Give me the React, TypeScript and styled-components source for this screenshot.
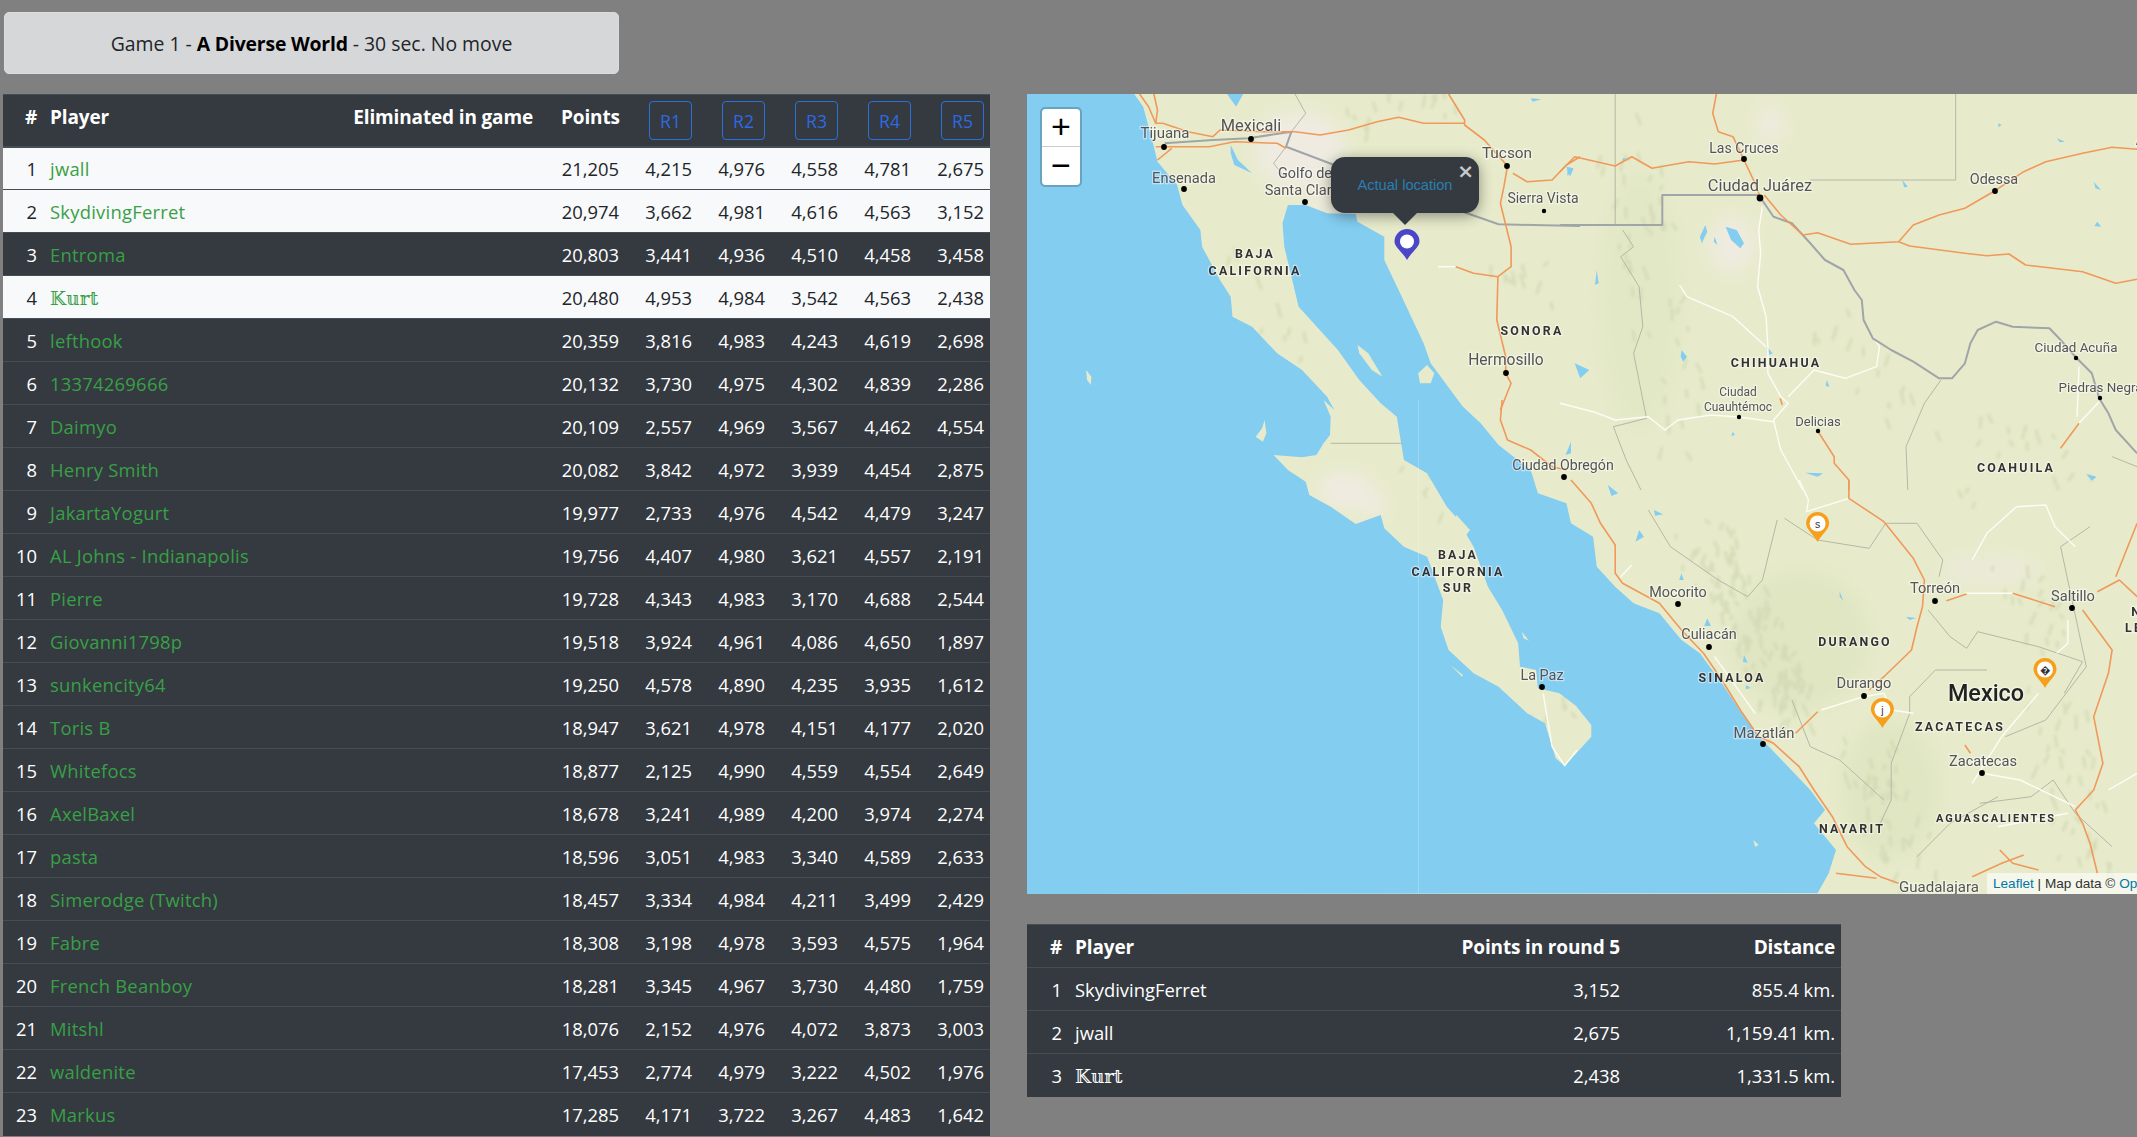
import React from 'react';
import styled, { createGlobalStyle } from 'styled-components';

const Global = createGlobalStyle`
  html, body { margin: 0; height: 100%; overflow: hidden; background: #808080; }
  body { font-family: "Open Sans", "DejaVu Serif", "DejaVu Sans", sans-serif; font-size: 18.4px; color: #212529; }
`;

const Page = styled.div`
  display: grid;
  grid-template-columns: 987px 1110px;
  column-gap: 37px;
  padding-left: 3px;
  height: 1137px;
  overflow: hidden;
`;
const LeftColumn = styled.div`display: flex; flex-direction: column; align-items: flex-start;`;
const RightColumn = styled.div`display: flex; flex-direction: column; align-items: flex-start; padding-top: 94px;`;
const Banner = styled.div`
  box-sizing: border-box;
  width: 615px;
  height: 62px;
  margin: 12px 0 20px 1px;
  display: flex;
  align-items: center;
  justify-content: center;
  background: #d6d7d9;
  border: 1px solid #dcdde0;
  border-radius: 5px;
  font-size: 19.4px;
  color: #212529;
  white-space: pre;
  b { font-weight: 700; color: #000; letter-spacing: -.2px; }
`;
const Table = styled.table<{ $width: number; $gap?: number }>`
  border-collapse: collapse;
  table-layout: fixed;
  width: ${p => p.$width}px;
  margin-top: ${p => p.$gap ?? 0}px;
  background: #343a40;
  color: #fff;
  flex: none;
`;
const HeadCell = styled.th<{ $align?: string; $width?: number; $pad?: number }>`
  box-sizing: border-box;
  ${p => p.$width ? `width: ${p.$width}px;` : ''}
  height: 52px;
  padding: 9px ${p => p.$pad ?? 6}px 0 7px;
  vertical-align: top;
  text-align: ${p => p.$align ?? 'left'};
  font-weight: 700;
  font-size: 19px;
  line-height: 26px;
  letter-spacing: -.15px;
  border-top: 1px solid #454d55;
  border-bottom: 2px solid #454d55;
  white-space: nowrap;
`;
const SmallHead = styled(HeadCell)`
  height: 43px;
  padding-top: 9px;
  border-bottom: 1px solid #454d55;
`;
const RoundHead = styled(HeadCell)`padding-top: 6px;`;
const RoundButton = styled.button`
  box-sizing: border-box;
  display: block;
  margin-left: auto;
  width: 43px;
  height: 39px;
  padding: 0;
  background: transparent;
  border: 1px solid #2b71db;
  border-radius: 4px;
  color: #2f69e2;
  font: 400 17.6px "Open Sans", sans-serif;
`;
const Row = styled.tr<{ $light?: boolean }>`
  background: ${p => p.$light ? '#f8f9fa' : '#343a40'};
  color: ${p => p.$light ? '#212529' : '#fff'};
`;
const Cell = styled.td<{ $align?: string }>`
  box-sizing: border-box;
  height: 43px;
  padding: 0 6px 0 7px;
  border-top: 1px solid #454d55;
  text-align: ${p => p.$align ?? 'left'};
  white-space: nowrap;
  overflow: hidden;
`;
const PlayerName = styled.span`color: #38a046; letter-spacing: .25px;`;
const MapFrame = styled.div`
  position: relative;
  width: 1110px;
  height: 800px;
  overflow: hidden;
  flex: none;
  background: #e8ebcb;
`;
const MapDrawing = styled.svg`
  display: block;
  width: 1110px;
  height: 800px;
`;
const Zoom = styled.div`
  position: absolute;
  left: 13px;
  top: 13px;
  width: 42px;
  border: 2px solid rgba(0,0,0,.2);
  border-radius: 5px;
  background-clip: padding-box;
  box-sizing: border-box;
`;
const ZoomButton = styled.div<{ $last?: boolean }>`
  box-sizing: border-box;
  height: 38px;
  padding-bottom: 3px;
  display: flex;
  align-items: center;
  justify-content: center;
  background: #fff;
  color: #000;
  font: 400 34px/1 "Liberation Sans", sans-serif;
  border-bottom: ${p => p.$last ? 'none' : '1px solid #ccc'};
  border-radius: ${p => p.$last ? '0 0 4px 4px' : '4px 4px 0 0'};
`;
const Popup = styled.div`
  position: absolute;
  left: 304px;
  top: 63px;
  box-sizing: border-box;
  width: 148px;
  height: 56px;
  padding-top: 19px;
  text-align: center;
  background: #343a40;
  border-radius: 14px;
  box-shadow: 0 3px 14px rgba(0,0,0,.4);
  color: #2a7fb0;
  font: 400 14.6px/18px "Liberation Sans", Arial, sans-serif;
  &::after {
    content: '';
    position: absolute;
    left: 61px;
    bottom: -12px;
    border-left: 13px solid transparent;
    border-right: 13px solid transparent;
    border-top: 13px solid #343a40;
  }
`;
const PopupClose = styled.span`
  position: absolute;
  right: 5px;
  top: 4px;
  color: #c6c8ca;
  font: 700 20px/20px "DejaVu Sans", sans-serif;
`;
const Attribution = styled.div`
  position: absolute;
  left: 960px;
  bottom: 0;
  height: 21px;
  width: 160px;
  padding-left: 6px;
  background: rgba(255,255,255,.62);
  color: #333;
  font: 400 13.6px/21px "Liberation Sans", Arial, sans-serif;
  white-space: nowrap;
  overflow: hidden;
  a { color: #0078a8; text-decoration: none; }
`;

const conv = (ox: number, oy: number, sx: number) => (...n: number[]) => {
  const out: string[] = [];
  for (let i = 0; i < n.length; i += 2) out.push(`${(ox + n[i] / sx).toFixed(1)},${(oy + n[i + 1] / 3).toFixed(1)}`);
  return out.join(' ');
};
const A = conv(1020, 90, 2.8);
const B = conv(1020, 400, 2.8);
const C = conv(1560, 90, 2.717);
const D = conv(1560, 480, 2.717);

const sea = [
  '1027,94',
  A(320,12,345,50,355,90,375,170,385,215,440,285,455,345,505,420,510,470,560,570,590,620,595,680,650,710,720,790,790,840,860,920,880,960),
  B(850,0,870,50,868,105,850,130,830,165,790,172,710,165,750,210,800,245,810,285,870,320,940,372,1010,345,1020,385,1075,440,1140,470,1185,600,1178,680,1200,750,1270,820,1340,860,1420,940,1470,970,1500,1075,1525,1097),
  D(40,825,85,770,85,735,45,680),
  B(1560,920,1510,880,1450,865,1445,810,1400,800,1395,730,1350,630,1310,560,1270,440,1220,350,1195,320,1140,220,1075,180,1055,50,1010,10),
  A(950,870,890,780,780,650,740,470,735,400,750,345,800,345,860,370,940,372,945,395,1020,440,1020,510,1060,600,1130,760,1150,820,1240,950),
  B(1220,0,1290,70,1340,135,1430,210,1450,280,1530,310),
  D(30,130,90,170,100,260,150,320,200,370,270,400,330,480,380,520,440,610,500,710,550,780,620,860,680,930,720,990,690,1030,750,1110,730,1180,700,1240),
  '1027,894',
].join(' ');

const islands = [
  B(685,60,690,100,680,125,660,110,678,85),
  A(945,765,975,790,1015,860,985,840,950,790),
  A(1115,850,1140,825,1160,850,1150,880,1120,880),
  A(185,840,200,860,198,885,188,870),
  B(1222,345,1260,390,1245,412,1210,370),
  B(1405,695,1425,722,1410,715),
  B(1205,795,1240,825,1238,830),
  D(525,1080,540,1095,530,1100),
];
const lakes = [
  C(450,410,480,420,500,460,490,475,465,450), C(395,405,400,425,385,460,380,440), C(420,440,428,465,418,455),
  C(330,780,345,800,335,815,328,800), C(100,540,105,580,95,585), C(40,820,80,840,55,865), C(930,270,945,290,935,292),
  C(1190,100,1200,105,1192,112), C(1350,145,1372,155,1358,157), C(1450,275,1470,300,1455,295), C(1460,395,1470,410,1452,408),
  C(665,1148,715,1150,700,1160), C(1430,1152,1458,1160,1445,1172), C(30,1055,15,1095,30,1090), C(470,1025,475,1035,465,1038), C(725,870,732,890,722,888), C(562,770,578,790,568,795),
  C(170,205,180,205,170,215), C(20,235,35,240,20,258),
  A(590,165,610,210,650,250,600,225,590,190), A(580,12,625,12,605,50), A(1530,230,1550,235,1540,260), A(1430,25,1460,28,1435,35),
  D(130,15,158,40,140,48), D(215,150,228,170,205,185), D(330,280,336,300,324,300), D(400,415,410,438,392,438), D(500,525,510,548,497,545), D(760,335,770,362,760,350), D(940,410,968,414,950,420), D(505,615,518,624,505,628), D(255,90,280,103,258,107),
];
const orange = [
  C(0,245,40,200,150,228,195,200,250,235,350,215,420,222,500,210),
  C(425,12,415,70,430,125,470,140,500,210,530,280,543,320),
  C(555,315,600,375,660,435,700,428,790,463,920,455,960,405,1030,375,1100,355,1182,302,1260,245,1320,215,1420,190,1500,172,1568,178),
  C(920,455,950,468,1100,490,1160,497,1220,492,1265,525,1340,535,1420,545,1510,580,1568,568),
  A(1200,12,1245,90,1245,105,1300,150,1365,228,1355,290,1345,340,1375,470,1375,530,1338,560,1335,690,1360,800,1360,850,1375,880,1345,960),
  A(335,12,360,50,380,100,400,100,470,125,540,140,560,120,680,125,770,125,840,135,920,120,1000,95,1060,82,1130,100,1245,100),
  A(375,12,385,60,380,100), A(380,170,430,170,530,170,600,155,720,160,745,175), A(385,210,425,175),
  A(1380,250,1420,275,1490,270,1530,225,1568,200), A(1220,530,1270,550,1338,560),
  B(1350,0,1345,60,1365,120,1430,150,1490,200,1530,210), 
  D(30,0,85,70,110,130,150,195,150,280,170,310,270,370,330,450,390,520,440,600,490,690,540,770,580,790,650,860,690,930,740,1010,780,1100,830,1160,870,1190,920,1210),
  C(700,1022,745,1100,745,1120,785,1170,785,1200),
  D(785,0,785,55,880,125,960,235,990,300,985,380,970,440,955,510,880,590,840,630),
  D(1050,362,1105,342), D(1230,340,1345,380), D(640,760,700,695), D(1100,795,1115,820),
  D(1420,390,1500,510,1490,580,1450,710,1475,850,1450,930,1400,990,1420,1030,1440,1090,1460,1180),
  D(1460,335,1520,300,1568,350), D(1510,290,1568,130), D(1195,1110,1230,1150,1300,1170), D(1120,1190,1200,1150,1260,1125), D(750,1180,860,1195),
  C(1360,1075,1410,1000), C(598,925,604,945),
];
const white = [
  C(550,350,540,420,545,490,537,590,560,680,565,770,565,850,600,920,620,940,580,990,600,1080,660,1200),
  C(325,585,345,620,470,680,560,770),
  C(0,940,90,965,150,990,240,980,285,1020,320,990,410,975,486,981,580,995),
  C(620,920,690,840,775,865,860,830,868,770,850,740), C(1410,1000,1465,935), C(1410,830,1405,980),
  D(650,0,675,60,670,95,785,55), D(1100,340,1230,340), D(1240,80,1320,75,1345,140,1400,200), D(1120,240,1160,160,1240,80), D(1380,420,1380,490,1350,520),
  D(1300,640,1200,770,1120,910), D(1148,880,1250,900,1400,980), D(420,530,530,700), D(165,290,195,255), D(710,690,825,650,880,640,900,690,960,700),
  B(1465,880,1490,1040,1525,1097,1560,1050), A(1170,530,1220,530), D(1490,930,1568,880), D(1380,1000,1190,1040),
];
const border = A(405,160,540,150,640,145,760,125,745,170,880,225,1240,365,1340,403,1568,408);
const border2 = C(0,405,278,405,278,315,540,315,580,380,630,400,680,460,720,510,770,540,800,600,820,630,825,690,850,745,900,780,960,815,1030,865,1065,865,1100,820,1115,760,1135,720,1185,695,1230,710,1330,715,1360,750,1400,800,1445,850,1465,925,1490,970,1510,1020,1568,1090);
const states = [
  A(770,12,800,70,760,125), A(745,170,710,220,740,260), C(150,12,150,405), C(680,270,1075,270,1075,12),
  C(170,420,200,470,165,500,215,590,225,710,200,790,235,985,145,1010,180,1110,220,1200),
  C(1035,870,990,940,940,1070,945,1200), B(870,130,1070,130),
  D(590,120,550,300,510,350,430,300,300,200,240,90), D(610,115,700,180,840,205,885,130,970,130,1040,240,1030,290),
  D(1000,390,1060,470,1105,505,1135,455,1300,500,1420,545,1370,640), D(1160,570,1020,570,950,650,950,700,900,850,900,960,870,1030),
  D(1210,770,1320,720,1430,560,1360,200,1440,140), D(630,660,680,800,760,840,880,960), D(1140,970,1280,950,1340,900,1400,1000,1500,1100),
  D(970,1130,1060,1030,1190,950), C(1500,1100,1568,1130),
];

const streaks = (() => {
  let s = 1337;
  const rnd = () => { s = (s * 16807) % 2147483647; return s / 2147483647; };
  const ranges: [number, number, number, number, number][] = [
    [1700, 530, 1800, 720, 120], [1860, 730, 1920, 870, 45], [1620, 110, 1690, 470, 50], [1350, 120, 1470, 90, 14],
    [1830, 300, 1960, 500, 18], [2020, 560, 2090, 860, 60], [1230, 240, 1290, 350, 12], [1430, 440, 1440, 500, 10], [1540, 745, 1560, 700, 8],
    [1980, 420, 2100, 480, 14], [1500, 250, 1540, 300, 10],
  ];
  const out: string[] = [];
  ranges.forEach(([x0, y0, x1, y1, n]) => {
    for (let i = 0; i < n; i++) {
      const t = rnd();
      const x = x0 + (x1 - x0) * t + (rnd() - .5) * 60;
      const y = y0 + (y1 - y0) * t + (rnd() - .5) * 40;
      out.push(`M${x.toFixed(0)} ${y.toFixed(0)}l${(rnd() * 12 - 6).toFixed(1)} ${(5 + rnd() * 10).toFixed(1)}`);
    }
  });
  return out.join('');
})();

type L = [string, number, number, number?];
const cities: L[] = [
  ['Tijuana',1165,133,15],['Mexicali',1251,125,16.4],['Ensenada',1184,178,14.6],['Golfo de',1305,173,14.4],['Santa Clara',1302,190,14.6],['Tucson',1507,153,15.4],['Sierra Vista',1543,198,14],
  ['Hermosillo',1506,360,15.6],['Las Cruces',1744,148,14],['Odessa',1994,179,14.4],['Delicias',1818,421,13],['Ciudad Acuña',2076,347,13.4],['Ciudad Obregón',1563,465,14.2],['Mocorito',1678,592,14.4],
  ['Culiacán',1709,634,14.4],['Mazatlán',1764,733,14.8],['Durango',1864,683,14.6],['Torreón',1935,588,14.6],['Saltillo',2073,596,14.6],['Zacatecas',1983,761,14.6],['La Paz',1542,675,14.4],['Guadalajara',1939,887,15],['Abilene',2159,140,14],['Piedras Negras',2104,387,13.4],
];
const small: L[] = [['Ciudad',1738,392],['Cuauhtémoc',1738,407]];
const regions: L[] = [
  ['BAJA',1255,253],['CALIFORNIA',1255,270],['SONORA',1532,330],['CHIHUAHUA',1776,362],['COAHUILA',2016,467],['BAJA',1458,554],['CALIFORNIA',1458,571],['SUR',1458,587],
  ['SINALOA',1732,677],['DURANGO',1855,641],['ZACATECAS',1960,726],['NAYARIT',1852,828],['NUEVO',2157,611],['LEÓN',2145,627],
];
const dots: [number, number, number?][] = [
  [1164,147],[1251,139],[1184,189],[1305,202],[1507,166],[1544,211,2.2],[1506,373],[1744,159],[1760,198,3.4],[1995,191],[1739,417,2.2],[1818,431,2.2],[2076,358,2.2],[2100,398,2.2],
  [1564,477],[1678,604],[1709,647],[1763,744],[1864,696],[1935,601],[2072,608],[1982,773],[1542,687],
];

const Pin = ({ x, y, w, h, fill, r, label }: { x: number; y: number; w: number; h: number; fill: string; r: number; label?: string }) => (
  <g transform={`translate(${x} ${y})`}>
    <path
      fill={fill}
      d={`M0 ${h}C${-w * .14} ${h * .78} ${-w / 2} ${h * .58} ${-w / 2} ${w / 2}A${w / 2} ${w / 2} 0 1 1 ${w / 2} ${w / 2}C${w / 2} ${h * .58} ${w * .14} ${h * .78} 0 ${h}Z`}
    />
    <circle cx={0} cy={w / 2} r={r} fill="#fff" />
    {label && <text x={0} y={w / 2 + .5} textAnchor="middle" dominantBaseline="central" fontFamily="Liberation Sans, sans-serif" fontSize={10.5} fill="#333">{label}</text>}
  </g>
);

const TileMap = () => (
  <MapDrawing viewBox="1027 94 1110 800">
    <defs>
      <filter id="terrain" x="-5%" y="-5%" width="110%" height="110%"><feGaussianBlur stdDeviation="1.8" /></filter>
      <filter id="tint" x="-50%" y="-50%" width="200%" height="200%"><feGaussianBlur stdDeviation="9" /></filter>
      <filter id="soft" x="-5%" y="-5%" width="110%" height="110%"><feGaussianBlur stdDeviation=".35" /></filter>
    </defs>
    <rect x="1027" y="94" width="1110" height="800" fill="#e7ebcb" />
    <g filter="url(#tint)">
      <ellipse cx="1300" cy="150" rx="45" ry="40" fill="#efebe1" />
      <ellipse cx="1340" cy="205" rx="40" ry="10" fill="#efebe1" />
      <ellipse cx="1345" cy="490" rx="28" ry="18" fill="#f0ebe2" />
      <ellipse cx="1372" cy="505" rx="14" ry="12" fill="#f0ebe2" />
      <ellipse cx="1770" cy="125" rx="12" ry="20" fill="#efebe1" />
      <ellipse cx="1732" cy="245" rx="22" ry="28" fill="#efebe1" />
      <ellipse cx="1990" cy="570" rx="50" ry="12" fill="#eceadb" />
      <ellipse cx="1800" cy="640" rx="70" ry="70" fill="#e0e5c2" />
      <ellipse cx="1890" cy="790" rx="50" ry="70" fill="#e0e5c2" />
      <ellipse cx="1640" cy="300" rx="40" ry="130" fill="#e2e7c6" />
    </g>
    <path d={streaks} stroke="#d0d7b2" strokeOpacity=".75" strokeWidth="3" fill="none" filter="url(#terrain)" />
    <g filter="url(#soft)">
      <polygon points={sea} fill="#83cdf0" />
      {islands.map((p, i) => <polygon key={i} points={p} fill="#e7ebcb" />)}
      {lakes.map((p, i) => <polygon key={i} points={p} fill="#83cdf0" />)}
      <g fill="none" stroke="#b3b8a6" strokeWidth="1" strokeLinejoin="round">
        {states.map((p, i) => <polyline key={i} points={p} />)}
      </g>
      <g fill="none" stroke="#fdfdf6" strokeWidth="1.4" strokeLinejoin="round">
        {white.map((p, i) => <polyline key={i} points={p} />)}
      </g>
      <g fill="none" stroke="#a0a5a8" strokeWidth="2" strokeLinejoin="round">
        <polyline points={border} />
        <polyline points={border2} />
      </g>
      <g fill="none" stroke="#f0995a" strokeWidth="1.6" strokeLinejoin="round">
        {orange.map((p, i) => <polyline key={i} points={p} />)}
      </g>
      <line x1="1418.5" y1="400" x2="1418.5" y2="894" stroke="#fff" strokeOpacity=".22" />
      {dots.map(([x, y, r], i) => <circle key={i} cx={x} cy={y} r={r ?? 2.9} fill="#000" />)}
      <g textAnchor="middle" dominantBaseline="central" fontFamily="Roboto, sans-serif" paintOrder="stroke" stroke="#fff" strokeOpacity=".45" strokeWidth="2.5">
        {cities.map(([t, x, y, s], i) => <text key={i} x={x} y={y} fontSize={s} fill="#555">{t}</text>)}
        {small.map(([t, x, y], i) => <text key={i} x={x} y={y} fontSize={12} fill="#555">{t}</text>)}
        <text x={1760} y={185} fontSize={16.4} fill="#555">Ciudad Juárez</text>
        <text x={1986} y={693} fontSize={23.4} fontWeight={500} fill="#222">Mexico</text>
        <text x={1996} y={818} fontSize={11} fontWeight={700} letterSpacing={1.9} fill="#333">AGUASCALIENTES</text>
        {regions.map(([t, x, y], i) => <text key={i} x={x} y={y} fontSize={12.4} fontWeight={700} letterSpacing={2.2} fill="#333">{t}</text>)}
      </g>
    </g>
    <Pin x={1407} y={229} w={25} h={31} fill="#4a46c8" r={7} />
    <Pin x={1817.6} y={512} w={23} h={30} fill="#f59f1c" r={8} label="s" />
    <Pin x={1882.4} y={698} w={23} h={30} fill="#f59f1c" r={8} label="j" />
    <Pin x={2045} y={658} w={23} h={30} fill="#f59f1c" r={8} label="�" />
  </MapDrawing>
);

const overall: [string, string, string, string, string, string, string][] = [
  ['jwall','21,205','4,215','4,976','4,558','4,781','2,675'],
  ['SkydivingFerret','20,974','3,662','4,981','4,616','4,563','3,152'],
  ['Entroma','20,803','3,441','4,936','4,510','4,458','3,458'],
  ['𝕂𝕦𝕣𝕥','20,480','4,953','4,984','3,542','4,563','2,438'],
  ['lefthook','20,359','3,816','4,983','4,243','4,619','2,698'],
  ['13374269666','20,132','3,730','4,975','4,302','4,839','2,286'],
  ['Daimyo','20,109','2,557','4,969','3,567','4,462','4,554'],
  ['Henry Smith','20,082','3,842','4,972','3,939','4,454','2,875'],
  ['JakartaYogurt','19,977','2,733','4,976','4,542','4,479','3,247'],
  ['AL Johns - Indianapolis','19,756','4,407','4,980','3,621','4,557','2,191'],
  ['Pierre','19,728','4,343','4,983','3,170','4,688','2,544'],
  ['Giovanni1798p','19,518','3,924','4,961','4,086','4,650','1,897'],
  ['sunkencity64','19,250','4,578','4,890','4,235','3,935','1,612'],
  ['Toris B','18,947','3,621','4,978','4,151','4,177','2,020'],
  ['Whitefocs','18,877','2,125','4,990','4,559','4,554','2,649'],
  ['AxelBaxel','18,678','3,241','4,989','4,200','3,974','2,274'],
  ['pasta','18,596','3,051','4,983','3,340','4,589','2,633'],
  ['Simerodge (Twitch)','18,457','3,334','4,984','4,211','3,499','2,429'],
  ['Fabre','18,308','3,198','4,978','3,593','4,575','1,964'],
  ['French Beanboy','18,281','3,345','4,967','3,730','4,480','1,759'],
  ['Mitshl','18,076','2,152','4,976','4,072','3,873','3,003'],
  ['waldenite','17,453','2,774','4,979','3,222','4,502','1,976'],
  ['Markus','17,285','4,171','3,722','3,267','4,483','1,642'],
];
const lightRows = new Set([0, 1, 3]);
const roundResults = [
  ['SkydivingFerret', '3,152', '855.4 km.'],
  ['jwall', '2,675', '1,159.41 km.'],
  ['𝕂𝕦𝕣𝕥', '2,438', '1,331.5 km.'],
];

export default function App() {
  return (
    <Page>
      <Global />
      <LeftColumn>
        <Banner>Game 1 - <b>A Diverse World</b> - 30 sec. No move</Banner>
        <Table $width={987}>
          <thead>
            <tr>
              <HeadCell $align="right" $width={40}>#</HeadCell>
              <HeadCell $width={225}>Player</HeadCell>
              <HeadCell $align="right" $width={286} $pad={21}>Eliminated in game</HeadCell>
              <HeadCell $align="right" $width={71}>Points</HeadCell>
              {['R1', 'R2', 'R3', 'R4', 'R5'].map(r => (
                <RoundHead key={r} $align="right" $width={73}><RoundButton>{r}</RoundButton></RoundHead>
              ))}
            </tr>
          </thead>
          <tbody>
            {overall.map((row, i) => (
              <Row key={row[0]} $light={lightRows.has(i)}>
                <Cell $align="right">{i + 1}</Cell>
                <Cell colSpan={2}><PlayerName>{row[0]}</PlayerName></Cell>
                {row.slice(1).map((v, j) => <Cell key={j} $align="right">{v}</Cell>)}
              </Row>
            ))}
          </tbody>
        </Table>
      </LeftColumn>
      <RightColumn>
        <MapFrame>
          <TileMap />
          <Zoom>
            <ZoomButton>+</ZoomButton>
            <ZoomButton $last>−</ZoomButton>
          </Zoom>
          <Popup>
            Actual location
            <PopupClose>×</PopupClose>
          </Popup>
          <Attribution><a>Leaflet</a> | Map data © <a>OpenStreetMap</a></Attribution>
        </MapFrame>
        <Table $width={814} $gap={30}>
          <thead>
            <tr>
              <SmallHead $align="right" $width={41}>#</SmallHead>
              <SmallHead>Player</SmallHead>
              <SmallHead $align="right" $width={300}>Points in round 5</SmallHead>
              <SmallHead $align="right" $width={215}>Distance</SmallHead>
            </tr>
          </thead>
          <tbody>
            {roundResults.map((r, i) => (
              <Row key={r[0]}>
                <Cell $align="right">{i + 1}</Cell>
                <Cell>{r[0]}</Cell>
                <Cell $align="right">{r[1]}</Cell>
                <Cell $align="right">{r[2]}</Cell>
              </Row>
            ))}
          </tbody>
        </Table>
      </RightColumn>
    </Page>
  );
}
